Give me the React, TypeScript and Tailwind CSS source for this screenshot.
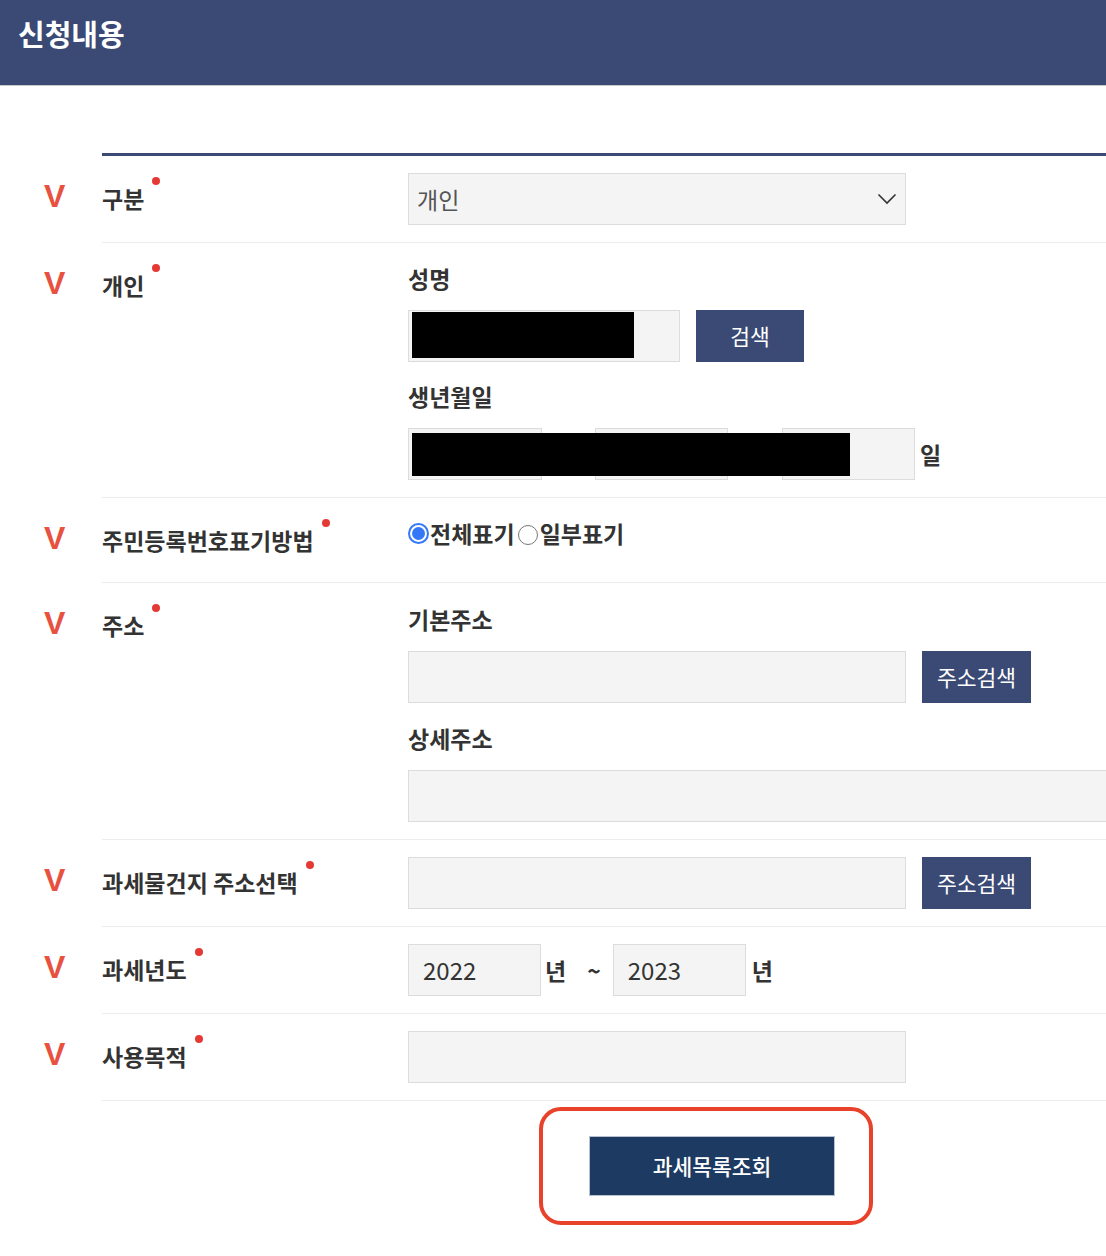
import type { ReactNode } from "react";

const field = "h-[52px] border border-[#dcdcdc] bg-[#f4f4f4]";
const subLabel = "text-[23px] leading-[36px] font-bold text-[#333]";
const navyBtn = "h-[52px] bg-[#3a4a75] text-[21.5px] text-white";

function Dot() {
  return <span className="ml-[8px] mt-[-5px] inline-block h-[8px] w-[8px] shrink-0 rounded-full bg-[#e53935]" />;
}

function Row({ label, children }: { label: string; children: ReactNode }) {
  return (
    <div className="flex pl-[44px]">
      <div className="w-[58px] shrink-0 pt-[24px] font-['Liberation_Sans',sans-serif] text-[32px] leading-[32px] font-bold text-[#e8513f]">
        V
      </div>
      <div className="flex flex-1 border-b border-[#ececec]">
        <div className="w-[306px] shrink-0 py-[26px]">
          <div className="flex items-start text-[23px] leading-[32px] font-bold text-[#333]">
            <span className="whitespace-nowrap">{label}</span>
            <Dot />
          </div>
        </div>
        <div className="min-w-0 flex-1 overflow-hidden py-[17px]">{children}</div>
      </div>
    </div>
  );
}

function Radio({ checked }: { checked?: boolean }) {
  if (checked) {
    return (
      <span className="flex h-[21px] w-[21px] shrink-0 items-center justify-center rounded-full border-[2px] border-[#3478f6] bg-white">
        <span className="h-[13px] w-[13px] rounded-full bg-[#3478f6]" />
      </span>
    );
  }
  return <span className="block h-[20px] w-[20px] shrink-0 rounded-full border-[1.5px] border-[#777] bg-white" />;
}

export default function App() {
  return (
    <div className="min-h-[1256px] w-full overflow-hidden bg-white font-['Noto_Sans_CJK_KR','Noto_Sans',sans-serif] text-[#333]">
      <header className="h-[86px] border-b border-[#c8c8c8] bg-[#3a4a75] pl-[18px] pt-[14px]">
        <h1 className="text-[29px] leading-[38px] font-bold text-white">신청내용</h1>
      </header>

      <div className="mt-[67px] ml-[102px] h-[3px] bg-[#3a4a75]" />

      <Row label="구분">
        <div className={`${field} flex w-[498px] items-center justify-between pl-[8px] pr-[8px] text-[23px] text-[#555]`}>
          <span>개인</span>
          <svg width="20" height="12" viewBox="0 0 20 12" fill="none">
            <path d="M1.5 1.5 L10 10 L18.5 1.5" stroke="#333" strokeWidth="1.6" />
          </svg>
        </div>
      </Row>

      <Row label="개인">
        <div className={subLabel}>성명</div>
        <div className="mt-[14px] flex gap-[16px]">
          <div className={`${field} w-[272px] pl-[3px] pt-[1px]`}>
            <div className="h-[46px] w-[222px] bg-black" />
          </div>
          <button className={`${navyBtn} w-[108px]`}>검색</button>
        </div>
        <div className={`${subLabel} mt-[16px]`}>생년월일</div>
        <div className="relative mt-[14px] flex items-center">
          <div className={`${field} w-[134px]`} />
          <span className="w-[53px] text-center text-[23px] font-bold">년</span>
          <div className={`${field} w-[133px]`} />
          <span className="w-[54px] text-center text-[23px] font-bold">월</span>
          <div className={`${field} w-[133px]`} />
          <span className="ml-[5px] text-[23px] font-bold">일</span>
          <div className="absolute left-[4px] top-[5px] h-[43px] w-[438px] bg-black" />
        </div>
      </Row>

      <Row label="주민등록번호표기방법">
        <div className="flex h-[36px] items-center text-[23px] font-bold">
          <Radio checked />
          <span className="ml-[1px]">전체표기</span>
          <span className="ml-[3px] mt-[4px]">
            <Radio />
          </span>
          <span className="ml-[2px]">일부표기</span>
        </div>
      </Row>

      <Row label="주소">
        <div className={`${subLabel} mt-[1px]`}>기본주소</div>
        <div className="mt-[14px] flex gap-[16px]">
          <div className={`${field} w-[498px]`} />
          <button className={`${navyBtn} w-[109px]`}>주소검색</button>
        </div>
        <div className={`${subLabel} mt-[17px]`}>상세주소</div>
        <div className={`${field} mt-[14px] w-[760px]`} />
      </Row>

      <Row label="과세물건지 주소선택">
        <div className="flex gap-[16px]">
          <div className={`${field} w-[498px]`} />
          <button className={`${navyBtn} w-[109px]`}>주소검색</button>
        </div>
      </Row>

      <Row label="과세년도">
        <div className="flex items-center text-[23px]">
          <div className={`${field} flex w-[133px] items-center pl-[14px] text-[24px] text-[#333]`}>2022</div>
          <span className="ml-[4px] font-bold">년</span>
          <span className="ml-[21px] font-bold">~</span>
          <div className={`${field} ml-[12px] flex w-[133px] items-center pl-[14px] text-[24px] text-[#333]`}>2023</div>
          <span className="ml-[6px] font-bold">년</span>
        </div>
      </Row>

      <Row label="사용목적">
        <div className={`${field} w-[498px]`} />
      </Row>

      <div className="ml-[539px] mt-[6px] h-[118px] w-[334px] rounded-[22px] border-[4px] border-[#e8432a] pl-[46px] pt-[25px]">
        <button className="h-[60px] w-[246px] border border-[#b8c2cf] bg-[#1d3a62] text-[21.5px] font-medium text-white">
          과세목록조회
        </button>
      </div>
    </div>
  );
}
